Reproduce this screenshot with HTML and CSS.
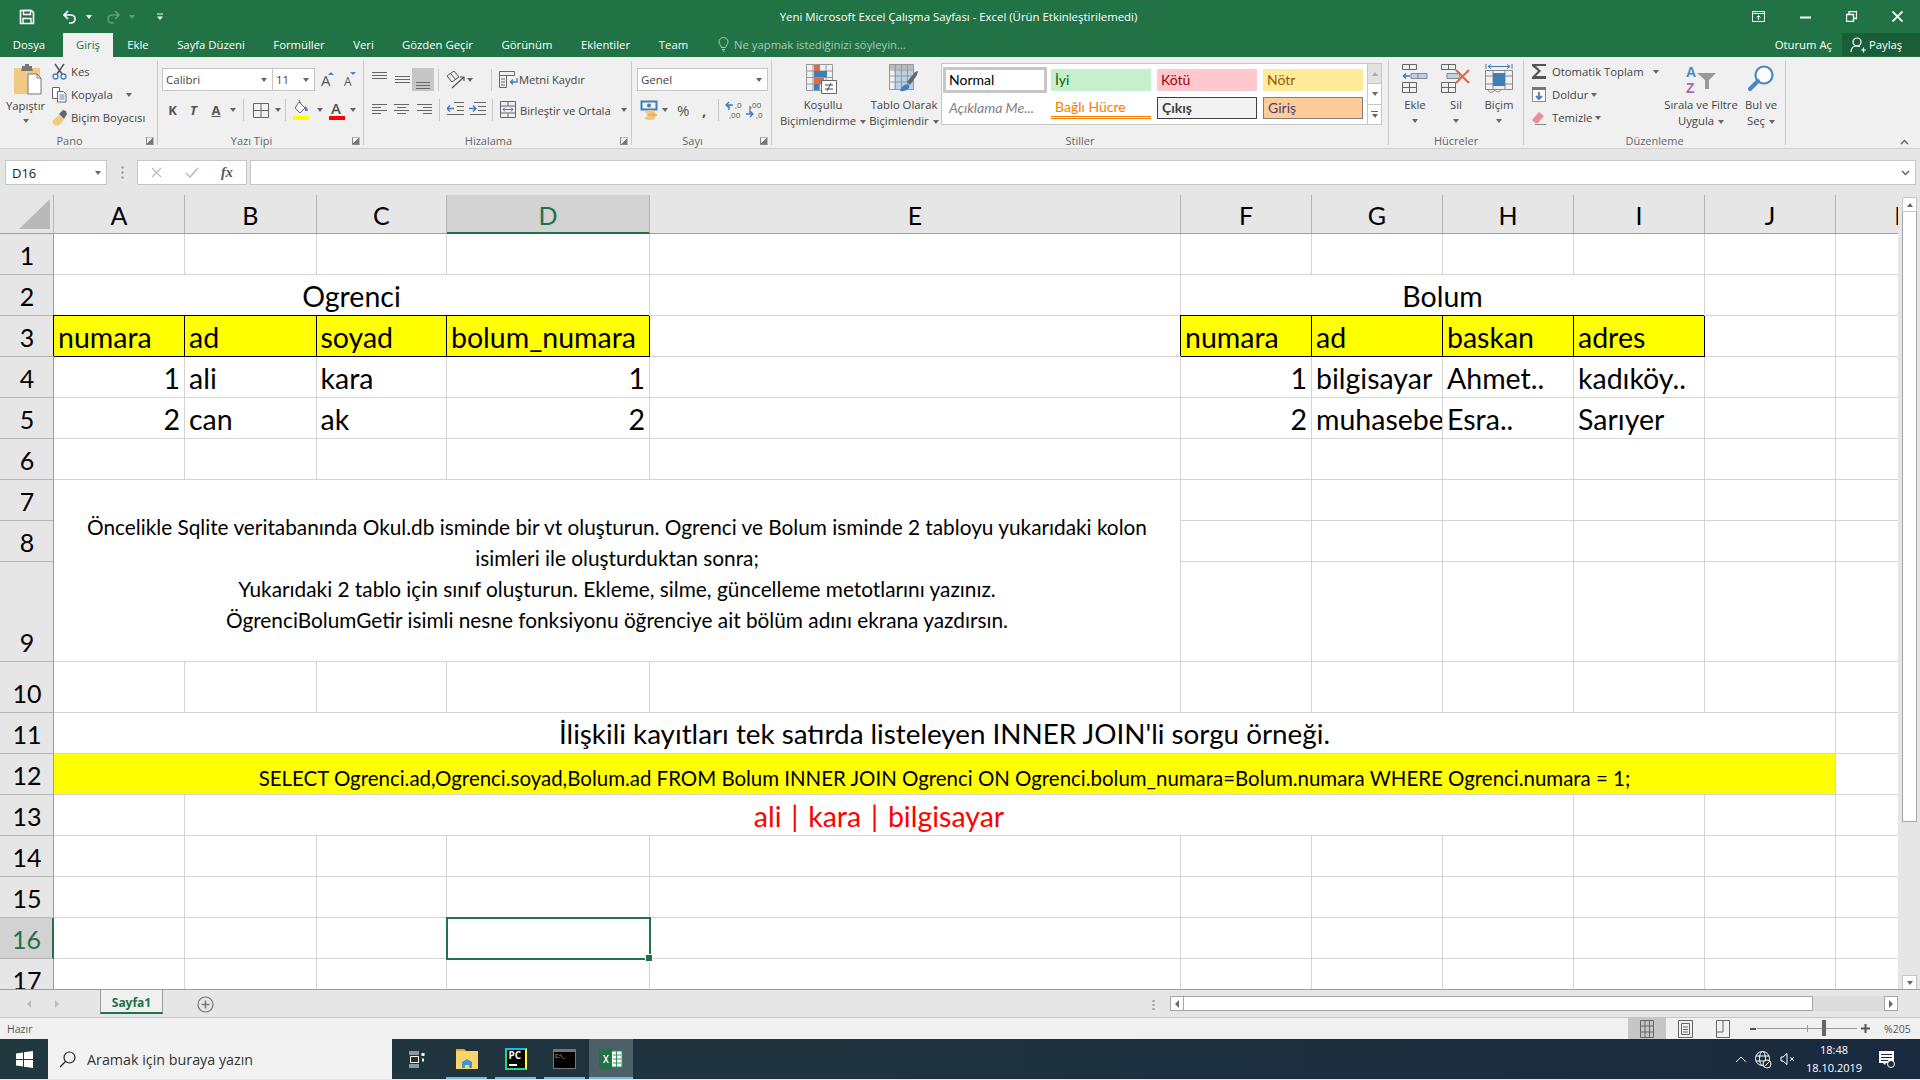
FILE: index.html
```html
<!DOCTYPE html>
<html lang="tr">
<head>
    <meta charset="UTF-8">
    <meta name="viewport" content="width=device-width, initial-scale=1.0">
    <title>Yeni Microsoft Excel Çalışma Sayfası - Excel</title>
    <link rel="stylesheet" href="styles.css">
</head>
<body>
<div class="app">

    <!-- title bar -->
    <div class="titlebar">
        <div class="qat">
            <svg class="q-save" width="16" height="16" viewBox="0 0 16 16"><path d="M1.500 1.500h11l2 2v11h-13z" fill="none" stroke="#fff" stroke-width="1.600"/><path d="M4.500 1.500h7v4h-7zM4 14.500v-5h8v5" fill="none" stroke="#fff" stroke-width="1.400"/></svg>
            <svg class="q-undo" width="16" height="16" viewBox="0 0 16 16"><path d="M6 2L2 6l4 4M2.500 6H9a4 4 0 0 1 0 8H7" fill="none" stroke="#fff" stroke-width="1.700"/></svg>
            <i class="arr arr-w q-a1"></i>
            <svg class="q-redo" width="16" height="16" viewBox="0 0 16 16"><path d="M10 2l4 4-4 4M13.500 6H7a4 4 0 0 0 0 8h2" fill="none" stroke="#5f9c7c" stroke-width="1.700"/></svg>
            <i class="arr arr-dim q-a2"></i>
            <svg class="q-more" width="8" height="8" viewBox="0 0 8 8"><path d="M1 1h6" stroke="#fff"/><path d="M1 3.500h6L4 7z" fill="#fff"/></svg>
        </div>
        <div class="doc-title">Yeni Microsoft Excel Çalışma Sayfası - Excel (Ürün Etkinleştirilemedi)</div>
        <div class="win-btns">
            <svg width="13" height="11" viewBox="0 0 13 11"><path d="M.5.500h12v10H.5zM.5 2.500h12" fill="none" stroke="#fff"/><path d="M6.500 9V4.500M4.500 6.500l2-2 2 2" fill="none" stroke="#fff"/></svg>
            <svg width="11" height="11" viewBox="0 0 11 11"><path d="M0 6.500h11" stroke="#fff" stroke-width="2"/></svg>
            <svg width="11" height="11" viewBox="0 0 11 11"><path d="M.5 3.500h7v7h-7zM3 3V.500h7.500v7H8" fill="none" stroke="#fff" stroke-width="1.300"/></svg>
            <svg width="11" height="11" viewBox="0 0 11 11"><path d="M.5.500l10 10M10.500.500l-10 10" stroke="#fff" stroke-width="1.800"/></svg>
        </div>
    </div>

    <!-- ribbon tabs -->
    <div class="tabs">
        <div class="tab tab-file">Dosya</div>
        <div class="tab tab-on">Giriş</div>
        <div class="tab">Ekle</div>
        <div class="tab">Sayfa Düzeni</div>
        <div class="tab">Formüller</div>
        <div class="tab">Veri</div>
        <div class="tab">Gözden Geçir</div>
        <div class="tab">Görünüm</div>
        <div class="tab">Eklentiler</div>
        <div class="tab">Team</div>
        <div class="tell">
            <svg width="11" height="15" viewBox="0 0 11 15"><path d="M3.500 10.500C3 8 1 7.500 1 5a4.500 4.500 0 0 1 9 0c0 2.500-2 3-2.500 5.500zM4 12.500h3M4.500 14h2" fill="none" stroke="#a9c9b7"/></svg>
            <span>Ne yapmak istediğinizi söyleyin...</span>
        </div>
        <div class="signin">Oturum Aç</div>
        <div class="share">
            <svg width="16" height="16" viewBox="0 0 16 16"><circle cx="7" cy="5" r="4" fill="none" stroke="#fff" stroke-width="1.200"/><path d="M1 15c0-4 2.500-6 6-6 1 0 2 .2 2.800.6M11 13h5M13.500 10.500v5" fill="none" stroke="#fff" stroke-width="1.200"/></svg>
            <span>Paylaş</span>
        </div>
    </div>

    <!-- ribbon -->
    <div class="ribbon">

        <div class="grp g-pano">
            <div class="grp-body">
                <div class="big big-paste">
                    <svg width="30" height="31" viewBox="0 0 30 31"><path d="M1 4h26v26H1z" fill="#f1c983"/><path d="M9 4V2h3V0h4v2h3v2l1 3H8z" fill="#777"/><path d="M15 10h9l4 4v16H15z" fill="#fff" stroke="#777"/><path d="M24 10v4h4" fill="none" stroke="#777"/></svg>
                    <div class="big-text">Yapıştır</div>
                    <i class="arr"></i>
                </div>
                <div class="small-col">
                    <div class="small"><svg width="18" height="17" viewBox="0 0 18 17"><path d="M4 1l7 10M13 1L6 11" stroke="#555" stroke-width="1.500"/><circle cx="4.500" cy="13.500" r="2.500" fill="none" stroke="#3f7ebd" stroke-width="1.300"/><circle cx="12.500" cy="13.500" r="2.500" fill="none" stroke="#3f7ebd" stroke-width="1.300"/></svg><span>Kes</span></div>
                    <div class="small"><svg width="18" height="17" viewBox="0 0 18 17"><path d="M1.500 1.500h7v11h-7z" fill="#fff" stroke="#666"/><path d="M6.500 5.500h6l2.500 2.500v8h-8.500z" fill="#fff" stroke="#666"/><path d="M8.500 9h5M8.500 11h5M8.500 13h5" stroke="#4a86c5"/></svg><span>Kopyala</span><i class="arr a-kop"></i></div>
                    <div class="small"><svg width="18" height="17" viewBox="0 0 18 17"><path d="M1 12l7-6 5 5-6 6-2-1-1 1-2-3z" fill="#f1c983"/><path d="M8 5l4-4 3 1 1 3-3 5z" fill="#666"/></svg><span>Biçim Boyacısı</span></div>
                </div>
            </div>
            <div class="grp-label lab-l"><span></span><span>Pano</span><i class="launch"></i></div>
        </div>

        <div class="grp g-font">
            <div class="grp-body col">
                <div class="row r1">
                    <div class="combo c-font">Calibri<i class="arr"></i></div>
                    <div class="combo c-size">11<i class="arr"></i></div>
                    <svg class="grow-a" width="22" height="23" viewBox="0 0 22 23"><text x="4" y="18" class="ic-a">A</text><path d="M11 7l3-3 3 3z" fill="#4a86c5"/></svg>
                    <svg width="21" height="23" viewBox="0 0 21 23"><text x="5" y="18" class="ic-a ic-a2">A</text><path d="M11 4l3 3 3-3z" fill="#4a86c5"/></svg>
                </div>
                <div class="row r2">
                    <b class="fmt fmt-k">K</b>
                    <em class="fmt fmt-t">T</em>
                    <span class="fmt fmt-a">A</span>
                    <i class="arr"></i>
                    <i class="sep s-a"></i>
                    <svg width="22" height="20" viewBox="0 0 22 20"><path d="M3.500 3.500h15v14h-15zM11 3.500v14M3.500 10.500h15" fill="none" stroke="#666"/></svg>
                    <i class="arr a-b"></i>
                    <i class="sep s-a s-a2"></i>
                    <svg width="22" height="22" viewBox="0 0 22 22"><path d="M7 3l6 6-5 5-5-5z" fill="#fff" stroke="#666"/><path d="M7 1l2 4" stroke="#666"/><path d="M13 7c2 1 3 3 3 5h-3z" fill="#4a86c5"/><path d="M1 17h16v4H1z" fill="#ff0"/></svg>
                    <i class="arr a-b"></i>
                    <svg width="22" height="22" viewBox="0 0 22 22"><text x="8" y="15" class="ic-a3">A</text><path d="M6 17h16v4H6z" fill="#f00"/></svg>
                    <i class="arr a-col"></i>
                </div>
            </div>
            <div class="grp-label lab-l"><span></span><span>Yazı Tipi</span><i class="launch"></i></div>
        </div>

        <div class="grp g-align">
            <div class="grp-body col">
                <div class="row r1">
                    <svg width="22" height="23" viewBox="0 0 22 23"><path d="M3 4.500h15M3 7.500h15M3 10.500h15" stroke="#666"/></svg>
                    <svg width="22" height="23" viewBox="0 0 22 23"><path d="M4 8.500h15M4 11.500h15M4 14.500h15" stroke="#666"/></svg>
                    <div class="al-on"><svg width="22" height="23" viewBox="0 0 22 23"><path d="M4 14.500h14M4 17.500h14M4 20.500h14" stroke="#666"/></svg></div>
                    <i class="sep s-b"></i>
                    <svg width="22" height="22" viewBox="0 0 22 22"><path d="M2 7l7-5 5 6-7 5zM6 5l5 6" fill="none" stroke="#555"/><path d="M7 19L19 8M15 8h4v4" fill="none" stroke="#555" stroke-width="1.200"/></svg>
                    <i class="arr"></i>
                    <i class="sep s-c"></i>
                    <div class="small tool-wrap"><svg width="19" height="18" viewBox="0 0 19 18"><path d="M.5.500h15v4H.5zM.5 4.500h7v12H.5zM2 8h4M2 11h4M2 14h4" fill="none" stroke="#666"/><path d="M18 7v4h-6M14 8.500L11.500 11l2.500 2.500" fill="none" stroke="#3f7ebd" stroke-width="1.300"/></svg><span>Metni Kaydır</span></div>
                </div>
                <div class="row r2">
                    <svg width="22" height="20" viewBox="0 0 22 20"><path d="M3 4.500h15M3 7.500h9M3 10.500h15M3 13.500h9" stroke="#666"/></svg>
                    <svg width="22" height="20" viewBox="0 0 22 20"><path d="M3 4.500h15M6 7.500h9M3 10.500h15M6 13.500h9" stroke="#666"/></svg>
                    <svg width="22" height="20" viewBox="0 0 22 20"><path d="M4 4.500h15M10 7.500h9M4 10.500h15M10 13.500h9" stroke="#666"/></svg>
                    <i class="sep s-d"></i>
                    <svg width="22" height="20" viewBox="0 0 22 20"><path d="M7 2.500h10M10 6.500h7M10 10.500h7M0 14.500h17" stroke="#666"/><path d="M7 8.500H0M3 5.500L0 8.500l3 3" fill="none" stroke="#3f7ebd" stroke-width="1.500"/></svg>
                    <svg width="22" height="20" viewBox="0 0 22 20"><path d="M5 2.500h12M9 6.500h8M9 10.500h8M1 14.500h16" stroke="#666"/><path d="M0 8.500h7M4 5.500l3 3-3 3" fill="none" stroke="#3f7ebd" stroke-width="1.500"/></svg>
                    <i class="sep s-e"></i>
                    <div class="small tool-wrap"><svg width="19" height="18" viewBox="0 0 19 18"><path d="M.5.500h15v16H.5zM.5 5h15M.5 12h15M8 .5V5M8 12v4.500" fill="none" stroke="#666"/><path d="M3 8.500h10M5 6.500l-2 2 2 2M11 6.500l2 2-2 2" fill="none" stroke="#3f7ebd"/></svg><span>Birleştir ve Ortala</span><i class="arr a-mrg"></i></div>
                </div>
            </div>
            <div class="grp-label lab-l"><span></span><span>Hizalama</span><i class="launch"></i></div>
        </div>

        <div class="grp g-num">
            <div class="grp-body col">
                <div class="row r1"><div class="combo c-num">Genel<i class="arr"></i></div></div>
                <div class="row r2">
                    <svg width="20" height="20" viewBox="0 0 20 20"><path d="M1.500 1.500h15v8h-15z" fill="none" stroke="#3f7ebd" stroke-width="2"/><circle cx="9" cy="5.500" r="2" fill="#3f7ebd"/><ellipse cx="10" cy="12" rx="5" ry="2" fill="#f1c983"/><ellipse cx="12" cy="15" rx="5" ry="2" fill="#e9b562"/><ellipse cx="10" cy="18" rx="5" ry="2" fill="#f1c983"/></svg>
                    <i class="arr"></i>
                    <span class="pct">%</span>
                    <span class="comma">,</span>
                    <i class="sep s-f"></i>
                    <svg width="20" height="20" viewBox="0 0 20 20"><path d="M8 5H1M4 2L1 5l3 3M4 5v5" fill="none" stroke="#3f7ebd" stroke-width="1.300"/><text x="10" y="8" class="ic-n">,0</text><text x="4" y="18" class="ic-n">,00</text></svg>
                    <svg width="20" height="20" viewBox="0 0 20 20"><path d="M1 14h7M5 11l3 3-3 3M5 6v8" fill="none" stroke="#3f7ebd" stroke-width="1.300"/><text x="5" y="8" class="ic-n">,00</text><text x="11" y="18" class="ic-n">,0</text></svg>
                </div>
            </div>
            <div class="grp-label lab-l"><span></span><span>Sayı</span><i class="launch"></i></div>
        </div>

        <div class="grp g-styles">
            <div class="grp-body">
                <div class="big big-cond">
                    <svg width="34" height="30" viewBox="0 0 34 30"><path d="M.5.500h26v26H.5zM.5 7h26M.5 13.500h26M.5 20h26M7 .5v26M13.500.5v26M20 .5v26" fill="none" stroke="#999"/><path d="M8 1h6v6H8zM8 14h10v6H8z" fill="#e0694a"/><path d="M8 7h13v6H8zM8 20h5v6H8z" fill="#3f7ebd"/><path d="M15.500 16.500h15v13h-15z" fill="#fff" stroke="#666"/><path d="M19 21h8M19 25h8M25 19l-4 8" fill="none" stroke="#444"/></svg>
                    <div class="big-text">Koşullu<br>Biçimlendirme<i class="arr"></i></div>
                </div>
                <div class="big big-table">
                    <svg width="30" height="30" viewBox="0 0 30 30"><path d="M0 0h25v5H0z" fill="#bbb"/><path d="M5 5h20v21H5z" fill="#bcd0e6"/><path d="M.5.500h24v25H.5zM.5 6h24M.5 12h24M.5 18h24M6.500.5v25M12.500.5v25M18.500.5v25" fill="none" stroke="#999"/><path d="M18 18L26 8l3-1-1 4-7 10z" fill="#666"/><path d="M11 27c2-6 6-8 9-6 2 3-3 7-9 6z" fill="#3f7ebd"/></svg>
                    <div class="big-text">Tablo Olarak<br>Biçimlendir<i class="arr"></i></div>
                </div>
                <div class="gallery">
                    <div class="g-items">
                        <div class="st st-normal">Normal</div>
                        <div class="st st-good">İyi</div>
                        <div class="st st-bad">Kötü</div>
                        <div class="st st-neutral">Nötr</div>
                        <div class="st st-note">Açıklama Me...</div>
                        <div class="st st-link">Bağlı Hücre</div>
                        <div class="st st-out">Çıkış</div>
                        <div class="st st-in">Giriş</div>
                    </div>
                    <div class="g-scroll">
                        <div class="g-btn g-dis"><i class="up"></i></div>
                        <div class="g-btn"><i class="arr"></i></div>
                        <div class="g-btn g-more"><i class="bar"></i><i class="arr"></i></div>
                    </div>
                </div>
            </div>
            <div class="grp-label"><span></span><span>Stiller</span><span></span></div>
        </div>

        <div class="grp g-cells">
            <div class="grp-body">
                <div class="big big-ins">
                    <svg width="26" height="30" viewBox="0 0 26 30"><path d="M.5.500h14v5H.5zM7.500.5v5M.5 18.500h14v10H.5zM7.500 18.500v10M.5 23.500h14" fill="none" stroke="#666"/><path d="M9 9.500h16v5H9zM16 9.500v5" fill="#bcd0e6" stroke="#888"/><path d="M8 12H1M4 9.500L1.500 12 4 14.500" fill="none" stroke="#3f7ebd" stroke-width="1.500"/></svg>
                    <div class="big-text">Ekle</div>
                    <i class="arr"></i>
                </div>
                <div class="big big-del">
                    <svg width="30" height="30" viewBox="0 0 30 30"><path d="M.5.500h14v5H.5zM7.500.5v5M.5 18.500h14v10H.5zM7.500 18.500v10M.5 23.500h14" fill="none" stroke="#666"/><path d="M6 9.500h13v5H6z" fill="#bcd0e6" stroke="#888"/><path d="M15 6l13 13M28 6L15 19" stroke="#e0694a" stroke-width="2.200"/></svg>
                    <div class="big-text">Sil</div>
                    <i class="arr"></i>
                </div>
                <div class="big big-fmt">
                    <svg width="28" height="30" viewBox="0 0 28 30"><path d="M1 0v5M27 0v5M3 2.500h22M6 .5l-3 2 3 2M22 .5l3 2-3 2" fill="none" stroke="#3f7ebd"/><path d="M.5 6.500h27v19H.5zM.5 12h27M8 6.500v19M20 6.500v19M.5 20h27" fill="none" stroke="#888"/><path d="M8 9h12v13H8z" fill="#3f7ebd"/><path d="M3 26c1 3 5 3 7 0 1 3 5 2 6 0" fill="none" stroke="#888"/></svg>
                    <div class="big-text">Biçim</div>
                    <i class="arr"></i>
                </div>
            </div>
            <div class="grp-label"><span></span><span>Hücreler</span><span></span></div>
        </div>

        <div class="grp g-edit">
            <div class="grp-body">
                <div class="small-col edit-col">
                    <div class="small"><svg width="20" height="17" viewBox="0 0 20 17"><path d="M1 1h14v2H5l5 5-5 5h10v3H1v-2l6-6-6-5z" fill="#555"/></svg><span>Otomatik Toplam</span><i class="arr a-sum"></i></div>
                    <div class="small"><svg width="20" height="17" viewBox="0 0 20 17"><path d="M1.500 1.500h13v14h-13z" fill="#fff" stroke="#888"/><path d="M1 1h14v3H1z" fill="#777"/><path d="M8 6v7M5 10l3 3 3-3" fill="none" stroke="#3f7ebd" stroke-width="1.800"/></svg><span>Doldur</span><i class="arr"></i></div>
                    <div class="small"><svg width="20" height="17" viewBox="0 0 20 17"><path d="M1 11l7-8 5 4-6 7H4z" fill="#ee8c9a"/><path d="M4 15.500h11" stroke="#888"/></svg><span>Temizle</span><i class="arr"></i></div>
                </div>
                <div class="big big-sort">
                    <svg class="az-ic" width="31" height="33" viewBox="0 0 31 33"><text x="0" y="14" class="ic-az ic-az-a">A</text><text x="0" y="30" class="ic-az ic-az-z">Z</text><path d="M11 10h19l-7 7v9h-4v-9z" fill="#999"/></svg>
                    <div class="big-text">Sırala ve Filtre<br>Uygula<i class="arr"></i></div>
                </div>
                <div class="big big-find">
                    <svg width="28" height="30" viewBox="0 0 28 30"><circle cx="17" cy="11" r="8.500" fill="#fff" stroke="#4a86c5" stroke-width="2.200"/><path d="M11 17L3 25" stroke="#4a86c5" stroke-width="4" stroke-linecap="round"/></svg>
                    <div class="big-text">Bul ve<br>Seç<i class="arr"></i></div>
                </div>
            </div>
            <div class="grp-label"><span></span><span>Düzenleme</span><span></span></div>
        </div>

        <svg class="collapse" width="9" height="6" viewBox="0 0 9 6"><path d="M1 5l3.500-3.500L8 5" fill="none" stroke="#666" stroke-width="1.500"/></svg>
    </div>

    <!-- formula bar -->
    <div class="fbar">
        <div class="namebox">D16<i class="arr"></i></div>
        <div class="fdots"></div>
        <div class="fbtns">
            <svg width="13" height="13" viewBox="0 0 13 13"><path d="M2 2l9 9M11 2l-9 9" stroke="#bdbdbd" stroke-width="1.400"/></svg>
            <svg width="14" height="13" viewBox="0 0 14 13"><path d="M1 7l4 4 8-9" fill="none" stroke="#bdbdbd" stroke-width="1.600"/></svg>
            <span class="fx">fx</span>
        </div>
        <div class="finput"><svg width="9" height="6" viewBox="0 0 9 6"><path d="M1 1l3.500 3.500L8 1" fill="none" stroke="#666" stroke-width="1.500"/></svg></div>
    </div>

    <!-- worksheet -->
    <div class="sheet-wrap">
        <div class="sheet">
            <div class="h h-corner"><i class="corner"></i></div><div class="h">A</div><div class="h">B</div><div class="h">C</div><div class="h h-on">D</div><div class="h">E</div><div class="h">F</div><div class="h">G</div><div class="h">H</div><div class="h">I</div><div class="h">J</div><div class="h">K</div>

            <div class="n">1</div><div class="c"></div><div class="c"></div><div class="c"></div><div class="c"></div><div class="c"></div><div class="c"></div><div class="c"></div><div class="c"></div><div class="c"></div><div class="c"></div><div class="c"></div>

            <div class="n">2</div><div class="c m4 ctr">Ogrenci</div><div class="c"></div><div class="c m4 ctr">Bolum</div><div class="c"></div><div class="c"></div>

            <div class="n">3</div><div class="c y">numara</div><div class="c y">ad</div><div class="c y">soyad</div><div class="c y">bolum_numara</div><div class="c"></div><div class="c y">numara</div><div class="c y">ad</div><div class="c y">baskan</div><div class="c y">adres</div><div class="c"></div><div class="c"></div>

            <div class="n">4</div><div class="c num">1</div><div class="c">ali</div><div class="c">kara</div><div class="c num">1</div><div class="c"></div><div class="c num">1</div><div class="c">bilgisayar</div><div class="c">Ahmet..</div><div class="c">kadıköy..</div><div class="c"></div><div class="c"></div>

            <div class="n">5</div><div class="c num">2</div><div class="c">can</div><div class="c">ak</div><div class="c num">2</div><div class="c"></div><div class="c num">2</div><div class="c">muhasebe</div><div class="c">Esra..</div><div class="c">Sarıyer</div><div class="c"></div><div class="c"></div>

            <div class="n">6</div><div class="c"></div><div class="c"></div><div class="c"></div><div class="c"></div><div class="c"></div><div class="c"></div><div class="c"></div><div class="c"></div><div class="c"></div><div class="c"></div><div class="c"></div>

            <div class="n">7</div>
            <div class="c note">Öncelikle Sqlite veritabanında Okul.db isminde bir vt oluşturun. Ogrenci ve Bolum isminde 2 tabloyu yukarıdaki kolon<br>isimleri ile oluşturduktan sonra;<br>Yukarıdaki 2 tablo için sınıf oluşturun. Ekleme, silme, güncelleme metotlarını yazınız.<br>ÖgrenciBolumGetir isimli nesne fonksiyonu öğrenciye ait bölüm adını ekrana yazdırsın.</div>
            <div class="c"></div><div class="c"></div><div class="c"></div><div class="c"></div><div class="c"></div><div class="c"></div>

            <div class="n">8</div><div class="c"></div><div class="c"></div><div class="c"></div><div class="c"></div><div class="c"></div><div class="c"></div>

            <div class="n">9</div><div class="c"></div><div class="c"></div><div class="c"></div><div class="c"></div><div class="c"></div><div class="c"></div>

            <div class="n">10</div><div class="c"></div><div class="c"></div><div class="c"></div><div class="c"></div><div class="c"></div><div class="c"></div><div class="c"></div><div class="c"></div><div class="c"></div><div class="c"></div><div class="c"></div>

            <div class="n">11</div><div class="c m10 ctr big-t">İlişkili kayıtları tek satırda listeleyen INNER JOIN'li sorgu örneği.</div><div class="c"></div>

            <div class="n">12</div><div class="c m10 ctr sql">SELECT Ogrenci.ad,Ogrenci.soyad,Bolum.ad FROM Bolum INNER JOIN Ogrenci ON Ogrenci.bolum_numara=Bolum.numara WHERE Ogrenci.numara = 1;</div><div class="c"></div>

            <div class="n">13</div><div class="c"></div><div class="c m7 ctr res">ali | kara | bilgisayar</div><div class="c"></div><div class="c"></div><div class="c"></div>

            <div class="n">14</div><div class="c"></div><div class="c"></div><div class="c"></div><div class="c"></div><div class="c"></div><div class="c"></div><div class="c"></div><div class="c"></div><div class="c"></div><div class="c"></div><div class="c"></div>

            <div class="n">15</div><div class="c"></div><div class="c"></div><div class="c"></div><div class="c"></div><div class="c"></div><div class="c"></div><div class="c"></div><div class="c"></div><div class="c"></div><div class="c"></div><div class="c"></div>

            <div class="n n-on">16</div><div class="c"></div><div class="c"></div><div class="c"></div><div class="c sel"></div><div class="c"></div><div class="c"></div><div class="c"></div><div class="c"></div><div class="c"></div><div class="c"></div><div class="c"></div>

            <div class="n">17</div><div class="c"></div><div class="c"></div><div class="c"></div><div class="c"></div><div class="c"></div><div class="c"></div><div class="c"></div><div class="c"></div><div class="c"></div><div class="c"></div><div class="c"></div>
        </div>
        <div class="vscroll">
            <div class="sb-btn"><i class="up"></i></div>
            <div class="sb-thumb"></div>
            <div class="sb-track"></div>
            <div class="sb-btn"><i class="arr"></i></div>
        </div>
    </div>

    <!-- sheet tabs -->
    <div class="sheetbar">
        <i class="nav nav-l"></i>
        <i class="nav nav-r"></i>
        <div class="sheet-tab">Sayfa1</div>
        <svg class="add" width="17" height="17" viewBox="0 0 17 17"><circle cx="8.500" cy="8.500" r="7.500" fill="none" stroke="#777" stroke-width="1.200"/><path d="M4.500 8.500h8M8.500 4.500v8" stroke="#777" stroke-width="1.500"/></svg>
        <div class="hdots"></div>
        <div class="hscroll">
            <div class="hbtn"><i class="tri-l"></i></div>
            <div class="hthumb"></div>
            <div class="htrack"></div>
            <div class="hbtn"><i class="tri-r"></i></div>
        </div>
    </div>

    <!-- status bar -->
    <div class="status">
        <span class="ready">Hazır</span>
        <div class="views">
            <div class="view view-on"><svg width="14" height="18" viewBox="0 0 14 18"><path d="M.5.500h13v17H.5zM.5 6h13M.5 12h13M5 .5v17M9.500.5v17" fill="none" stroke="#666"/></svg></div>
            <div class="view"><svg width="15" height="18" viewBox="0 0 15 18"><path d="M.5.500h14v17H.5z" fill="none" stroke="#666"/><path d="M3.500 3.500h8v11h-8zM5 7h5M5 9.500h5M5 12h5" fill="none" stroke="#666"/></svg></div>
            <div class="view"><svg width="14" height="18" viewBox="0 0 14 18"><path d="M.5.500h13v17H.5zM.5 12h6.500M7 .5V12" fill="none" stroke="#666"/></svg></div>
        </div>
        <div class="zoom">
            <i class="z-minus"></i>
            <div class="z-track"><i class="z-mid"></i><i class="z-thumb"></i></div>
            <svg width="9" height="9" viewBox="0 0 9 9"><path d="M0 4.500h9M4.500 0v9" stroke="#555" stroke-width="2"/></svg>
        </div>
        <span class="zoom-val">%205</span>
    </div>

    <!-- taskbar -->
    <div class="taskbar">
        <svg class="t-win" width="17" height="17" viewBox="0 0 17 17"><path d="M0 2.400l7-1V8H0zM8 1.200L17 0v8H8zM0 9h7v6.600l-7-1zM8 9h9v8l-9-1.200z" fill="#fff"/></svg>
        <div class="t-search">
            <svg width="17" height="17" viewBox="0 0 17 17"><circle cx="10.500" cy="6.500" r="5.500" fill="none" stroke="#222" stroke-width="1.200"/><path d="M6.500 10.500L1 16" stroke="#222" stroke-width="1.200"/></svg>
            <span>Aramak için buraya yazın</span>
        </div>
        <div class="t-app t-view"><svg width="17" height="17" viewBox="0 0 17 17"><path d="M1 1h10M1 3h10M1 14h10M1 16h10M2.500 5.500h8v6h-8z" fill="none" stroke="#fff"/><path d="M13.500 2h3v3h-3zM14 7.500h2v3h-2z" fill="#fff"/></svg></div>
        <div class="t-app t-run"><svg width="24" height="20" viewBox="0 0 24 20"><path d="M1 0h8l2 2h12v18H1z" fill="#fbd46b"/><path d="M1 0h8l2 2H1z" fill="#e2a72c"/><path d="M7 19v-6l5-3 5 3v6h-3v-3h-4v3z" fill="#3a96dd"/></svg></div>
        <div class="t-app t-run"><div class="pc"><span>PC</span><i></i></div></div>
        <div class="t-app t-run"><div class="cmd"><span>C:\_</span></div></div>
        <div class="t-app t-run t-active"><svg width="24" height="22" viewBox="0 0 24 22"><path d="M12 3h11v16H12z" fill="#fff" stroke="#2f8f5f"/><path d="M14 7h8M14 11h8M14 15h8M17.500 3v16" stroke="#2f8f5f"/><path d="M0 2l13-2v22L0 20z" fill="#217346"/><path d="M4 7l1.500 0L7 10l1.500-3H10l-2.200 4 2.200 4H8.500L7 12l-1.500 3H4l2.200-4z" fill="#fff"/></svg></div>
        <div class="tray">
            <svg width="12" height="7" viewBox="0 0 12 7"><path d="M1 6l5-5 5 5" fill="none" stroke="#fff"/></svg>
            <svg width="17" height="19" viewBox="0 0 17 19"><circle cx="7.500" cy="8.500" r="7" fill="none" stroke="#fff"/><ellipse cx="7.500" cy="8.500" rx="3" ry="7" fill="none" stroke="#fff"/><path d="M1 6h13M1 11h13" stroke="#fff"/><circle cx="12" cy="14" r="4" fill="#1c2d3e" stroke="#fff"/><path d="M9.500 16.500l5-5" stroke="#fff"/></svg>
            <svg width="15" height="14" viewBox="0 0 15 14"><path d="M1 5v4h2l4 3.500V1.500L3 5z" fill="none" stroke="#fff"/><path d="M10 5l4 4M14 5l-4 4" stroke="#fff"/></svg>
            <div class="clock"><span>18:48</span><span>18.10.2019</span></div>
            <svg class="notif" width="17" height="18" viewBox="0 0 17 18"><path d="M1 1h15v12H8l-1 2-2-2H1z" fill="#fff"/><path d="M3 4.500h11M3 7.500h11M3 10.500h7" stroke="#1c2d3e"/><circle cx="13" cy="14" r="3.500" fill="#1c2d3e" stroke="#fff"/></svg>
        </div>
    </div>
</div>
</body>
</html>
```

FILE: styles.css
```css
* { box-sizing: border-box; }
html, body { margin: 0; padding: 0; }
body { font-family: 'Open Sans', sans-serif; font-size: 11.3px; color: #444; background: #e6e6e6; }
i { display: block; font-style: normal; }
svg { display: block; flex: none; }

.app { width: 1920px; height: 1080px; display: flex; flex-direction: column; overflow: hidden; }

/* dropdown triangle used everywhere */
.arr { flex: none; width: 0; height: 0; border-left: 3.5px solid transparent; border-right: 3.5px solid transparent; border-top: 4px solid #666; }
.arr-w { border-top-color: #fff; }
.arr-dim { border-top-color: #5f9c7c; }

/* title bar */
.titlebar { height: 33px; background: #217346; color: #fff; display: grid; grid-template-columns: 1fr auto 1fr; align-items: center; }
.qat { display: flex; align-items: center; padding-left: 19px; }
.q-undo { margin-left: 27px; }
.q-a1 { margin-left: 8px; }
.q-redo { margin-left: 13px; }
.q-a2 { margin-left: 8px; }
.q-more { margin-left: 21px; }
.doc-title { font-size: 11.4px; color: #fff; padding-right: 3px; }
.win-btns { display: flex; align-items: center; justify-content: flex-end; gap: 35px; padding-right: 17px; }

/* tabs */
.tabs { height: 24px; background: #217346; display: grid; grid-template-columns: 63px 50px 50px 96px 80px 49px 99px 80px 77px 59px 1fr auto 78px; color: #fff; }
.tab { display: flex; align-items: center; justify-content: center; font-size: 11.3px; color: #fff; padding-bottom: 2px; }
.tab-file { padding-right: 5px; }
.tab-on { background: #f0f0f0; color: #217346; }
.tell { display: flex; align-items: center; gap: 5px; padding-left: 15px; color: #a9c9b7; font-size: 11.3px; padding-bottom: 2px; }
.signin { color: #fff; font-size: 11.3px; display: flex; align-items: center; padding-right: 10px; padding-bottom: 2px; }
.share { background: #1a5e39; display: flex; align-items: center; gap: 3px; padding-left: 8px; color: #fff; font-size: 11.3px; height: 23px; }

/* ribbon */
.ribbon { height: 92px; background: #f0f0f0; border-bottom: 1px solid #d2d2d2; display: flex; align-items: flex-start; padding-top: 4px; position: relative; }
.grp { height: 84px; border-right: 1px solid #c8c8c8; display: flex; flex-direction: column; flex: none; }
.g-pano { width: 158px; }
.g-font { width: 206px; }
.g-align { width: 268px; }
.g-num { width: 140px; }
.g-styles { width: 617px; }
.g-cells { width: 135px; }
.g-edit { width: 262px; }
.grp-body { flex: 1; display: flex; min-height: 0; }
.col { flex-direction: column; padding-top: 7px; }
.grp-label { height: 16px; margin-bottom: -4px; display: grid; grid-template-columns: 1fr auto 1fr; align-items: center; color: #666; font-size: 11px; line-height: 16px; }
.lab-l { padding-right: 18px; }
.launch { justify-self: end; margin-right: -15px; width: 8px; height: 8px; border-left: 1px solid #888; border-bottom: 1px solid #888; border-top: 1px solid #bbb; border-right: 1px solid #bbb; background: linear-gradient(135deg, transparent 50%, #777 50%); }
.collapse { position: absolute; right: 11px; bottom: 3px; }

.row { display: flex; align-items: center; }
.r1 { height: 23px; }
.r2 { height: 22px; margin-top: 8px; }
.sep { flex: none; width: 1px; height: 22px; background: #c8c8c8; }

.big { display: flex; flex-direction: column; align-items: center; flex: none; padding-top: 3px; }
.big-text { margin-top: 3px; text-align: center; line-height: 16px; white-space: nowrap; }
.big-text .arr { display: inline-block; vertical-align: middle; margin-left: 4px; }
.big > .arr { margin-top: 6px; }

.small-col { display: flex; flex-direction: column; margin-top: -1px; }
.small { height: 23px; display: flex; align-items: center; gap: 2px; white-space: nowrap; }

/* clipboard group */
.big-paste { width: 51px; }
.big-paste svg { margin-left: 5px; }
.big-paste .big-text { margin-top: 3px; }
.big-paste > .arr { margin-top: 5px; }
.a-kop { margin-left: 11px; }

/* font group */
.g-font .grp-body { padding-left: 4px; }
.combo { height: 23px; background: #fff; border: 1px solid #c6c6c6; display: flex; align-items: center; justify-content: space-between; padding: 0 5px 0 3px; flex: none; color: #444; font-size: 11.5px; }
.c-font { width: 111px; }
.c-size { width: 43px; margin-left: -1px; }
.ic-a { font-size: 15px; fill: #555; font-family: 'Open Sans', sans-serif; }
.ic-a2 { font-size: 12px; }
.grow-a { margin-left: 2px; }
.ic-a3 { font-size: 15px; fill: #555; font-family: 'Open Sans', sans-serif; font-weight: 600; }
.fmt { flex: none; width: 21px; text-align: center; font-size: 13px; color: #555; line-height: 22px; }
.fmt-k { font-weight: 700; }
.fmt-t { font-weight: 700; font-style: italic; }
.fmt-a { width: 26px; font-weight: 700; text-decoration: underline; padding-right: 2px; }
.s-a { margin: 0 6px 0 7px; }
.s-a2 { margin-left: 4px; }
.a-b { margin-left: 3px; }
.a-col { margin-left: 5px; }

/* alignment group */
.g-align .grp-body { padding-left: 5px; }
.al-on { background: #c6c6c6; height: 23px; width: 22px; margin-left: -1px; }
.s-b { margin: 0 6px 0 4px; }
.s-c { margin: 0 7px 0 18px; }
.s-d { margin: 0 7px 0 4px; }
.s-e { margin: 0 7px 0 1px; }
.tool-wrap { gap: 1px; font-size: 11.2px; }
.a-mrg { margin-left: 9px; }

/* number group */
.g-num .grp-body { padding-left: 5px; }
.c-num { width: 131px; }
.g-num .r2 { padding-left: 3px; }
.g-num .r2 .arr { margin-left: 2px; }
.pct { margin-left: 9px; font-size: 15px; color: #555; width: 15px; }
.comma { margin-left: 10px; font-size: 15px; font-weight: 700; color: #555; width: 7px; line-height: 12px; }
.s-f { margin: 0 6px 0 9px; }
.ic-n { font-size: 8px; fill: #555; font-family: 'Open Sans', sans-serif; }

/* styles group */
.big-cond { width: 94px; padding-left: 8px; }
.big-table { width: 74px; padding-left: 2px; }
.gallery { display: flex; height: 62px; margin: 2px 0 0 1px; }
.g-items { width: 427px; background: #fff; border: 1px solid #c6c6c6; padding: 5px 3px 0 3px; display: grid; grid-template-columns: repeat(4, 100px); grid-template-rows: 22px 22px; gap: 6px; font-family: Lato, sans-serif; font-size: 14px; }
.st { display: flex; align-items: center; padding-left: 4px; color: #000; padding-bottom: 1px; white-space: nowrap; overflow: hidden; }
.st-normal { border: 3px solid #c6c6c6; margin: -2px; padding-left: 3px; }
.st-good { background: #c6efce; color: #006100; }
.st-bad { background: #ffc7ce; color: #9c0006; }
.st-neutral { background: #ffeb9c; color: #9c5700; }
.st-note { color: #7f7f7f; font-style: italic; }
.st-link { color: #fa7d00; border-bottom: 3px double #fa7d00; }
.st-out { background: #f2f2f2; color: #3f3f3f; font-weight: 700; border: 1px solid #3f3f3f; }
.st-in { background: #ffcc99; color: #3f3f76; border: 1px solid #7f7f7f; }
.g-scroll { width: 14px; display: flex; flex-direction: column; border: 1px solid #c6c6c6; border-left: 0; }
.g-btn { flex: 1; display: flex; flex-direction: column; align-items: center; justify-content: center; gap: 2px; background: #fff; border-bottom: 1px solid #c6c6c6; }
.g-btn:last-child { border-bottom: 0; }
.g-dis { background: #e2e2e2; }
.g-more .bar { width: 7px; height: 1px; background: #666; }
.up { width: 0; height: 0; border-left: 3.5px solid transparent; border-right: 3.5px solid transparent; border-bottom: 4px solid #aaa; }

/* cells group */
.big-ins { width: 42px; margin-left: 5px; }
.big-del { width: 40px; }
.big-fmt { width: 46px; }

/* editing group */
.edit-col { width: 142px; padding-left: 7px; }
.edit-col .small { gap: 1px; }
.edit-col .arr { margin-left: 2px; }
.edit-col .a-sum { margin-left: 8px; }
.big-sort { width: 72px; }
.big-find { width: 48px; }
.az-ic { margin: -1px 0 -2px; }
.ic-az { font-family: 'Liberation Sans', sans-serif; font-weight: 700; font-size: 14px; }
.ic-az-a { fill: #4a86c5; }
.ic-az-z { fill: #a06ab4; }

/* formula bar */
.fbar { height: 46px; padding: 11px 4px 10px 5px; display: flex; background: #e6e6e6; }
.namebox { width: 102px; background: #fff; border: 1px solid #c6c6c6; display: flex; align-items: center; justify-content: space-between; padding: 0 5px 0 6px; font-size: 13px; color: #222; }
.fdots { width: 30px; background: radial-gradient(circle, #aaa 1px, transparent 1.500px) center / 3px 5px repeat-y; margin: 6px 0; }
.fbtns { width: 110px; background: #fff; border: 1px solid #c6c6c6; display: flex; align-items: center; padding-left: 12px; gap: 22px; margin-right: 3px; }
.fx { font-family: 'Liberation Serif', serif; font-style: italic; font-weight: 700; font-size: 14px; color: #555; }
.finput { flex: 1; background: #fff; border: 1px solid #c6c6c6; display: flex; align-items: center; justify-content: flex-end; padding-right: 5px; }

/* worksheet */
.sheet-wrap { height: 795px; display: flex; background: #e6e6e6; }
.sheet { width: 1898px; height: 795px; overflow: hidden; display: grid; grid-template-columns: 54px 131px 131.500px 130.500px 203px 531px 131px 131px 131px 131px 131px 134px; grid-template-rows: 39px repeat(8, 41px) 100px 51px repeat(7, 41px); background: #fff; font-family: Lato, sans-serif; font-size: 28.500px; color: #000; }
.h { background: #e6e6e6; border-right: 1px solid #b5b5b5; border-bottom: 1px solid #9d9d9d; text-align: center; line-height: 41px; font-size: 25px; }
.h-corner { position: relative; }
.corner { position: absolute; left: 19px; top: 4px; width: 31px; height: 30px; background: #b9b9b9; clip-path: polygon(100% 0, 100% 100%, 0 100%); }
.h-on { background: #d2d2d2; color: #217346; border-bottom: 2px solid #217346; }
.n { background: #e6e6e6; border-right: 1px solid #9d9d9d; border-bottom: 1px solid #b5b5b5; display: flex; align-items: flex-end; justify-content: center; line-height: 38px; font-size: 25px; padding-left: 1px; }
.n-on { background: #d2d2d2; color: #217346; border-right: 2px solid #217346; }
.c { border-right: 1px solid #d4d4d4; border-bottom: 1px solid #d4d4d4; padding: 0 4px; display: flex; align-items: flex-end; line-height: 38px; overflow: hidden; white-space: nowrap; min-width: 0; }
.num { justify-content: flex-end; }
.ctr { justify-content: center; }
.m4 { grid-column: span 4; }
.m7 { grid-column: span 7; }
.m10 { grid-column: span 10; }
.y { background: #ff0; border-right-color: #000; border-bottom-color: #000; box-shadow: -1px -1px 0 #000; }
.note { grid-column: span 5; grid-row: span 3; display: block; text-align: center; font-size: 20.800px; line-height: 31px; padding-top: 31px; }
.big-t { font-size: 27.800px; }
.sql { background: #ff0; font-size: 20.450px; line-height: 32px; }
.res { color: #f00; font-size: 28.500px; word-spacing: 2.500px; }
.sel { position: relative; overflow: visible; outline: 2px solid #217346; outline-offset: -1px; }
.sel::after { content: ""; position: absolute; right: -4px; bottom: -4px; width: 6px; height: 6px; background: #217346; border: 1px solid #fff; }

.vscroll { width: 22px; padding: 2px 3px 0 4px; display: flex; flex-direction: column; background: #e6e6e6; }
.sb-btn { height: 15px; flex: none; background: #fff; border: 1px solid #c6c6c6; display: flex; align-items: center; justify-content: center; }
.sb-btn .up { border-bottom-color: #666; }
.sb-thumb { height: 610px; flex: none; background: #fff; border: 1px solid #a6a6a6; border-top: 0; }
.sb-track { flex: 1; }

/* sheet tabs */
.sheetbar { height: 29px; border-top: 1px solid #9d9d9d; border-bottom: 1px solid #c6c6c6; margin-top: -1px; background: #e6e6e6; display: flex; align-items: flex-start; position: relative; z-index: 1; }
.nav { width: 0; height: 0; border-top: 4px solid transparent; border-bottom: 4px solid transparent; margin-top: 10px; }
.nav-l { margin-left: 27px; border-right: 4px solid #bbb; }
.nav-r { margin-left: 24px; border-left: 4px solid #bbb; }
.sheet-tab { width: 63px; height: 25px; margin: -1px 0 0 41px; background: #f0f0f0; border: 1px solid #9d9d9d; border-bottom: 2px solid #217346; color: #217346; font-weight: 700; font-size: 12px; text-align: center; line-height: 26px; }
.add { margin: 6px 0 0 34px; }
.hdots { width: 3px; height: 12px; margin: 9px 0 0 938px; background: radial-gradient(circle, #aaa 1px, transparent 1.500px) 0 0 / 3px 4px; }
.hscroll { width: 728px; height: 15px; margin: 6px 0 0 15px; display: flex; background: #dcdcdc; }
.hbtn { width: 14px; background: #fff; border: 1px solid #a6a6a6; display: flex; align-items: center; justify-content: center; flex: none; }
.tri-l { border-top: 4px solid transparent; border-bottom: 4px solid transparent; border-right: 4px solid #666; }
.tri-r { border-top: 4px solid transparent; border-bottom: 4px solid transparent; border-left: 4px solid #666; }
.hthumb { width: 629px; background: #fff; border: 1px solid #a6a6a6; border-left: 0; flex: none; }
.htrack { flex: 1; }

/* status bar */
.status { height: 21px; background: #f0f0f0; display: flex; align-items: center; font-size: 10.500px; color: #555; }
.ready { margin-left: 7px; width: 1621px; }
.views { display: flex; height: 21px; }
.view { width: 38px; display: flex; align-items: center; justify-content: center; }
.view-on { background: #c6c6c6; }
.zoom { display: flex; align-items: center; margin-left: 8px; }
.z-minus { width: 6px; height: 2px; background: #555; }
.z-track { width: 100px; height: 1px; background: #999; margin: 0 4px 0 1px; position: relative; }
.z-mid { position: absolute; left: 50px; top: -3px; width: 1px; height: 7px; background: #999; }
.z-thumb { position: absolute; left: 65px; top: -8px; width: 4px; height: 16px; background: #666; }
.zoom-val { margin-left: 14px; white-space: nowrap; }

/* taskbar */
.taskbar { height: 40px; background: linear-gradient(90deg, #21383f, #1a2a3e); display: flex; align-items: center; color: #fff; }
.t-win { margin-left: 16px; }
.t-search { width: 344px; height: 40px; margin: 0 0 0 15px; background: #f2f2f2; display: flex; align-items: center; padding-left: 11px; gap: 11px; color: #333; font-size: 14.300px; }
.t-app { height: 40px; display: flex; align-items: center; justify-content: center; position: relative; flex: none; width: 49px; }
.t-view { margin: 0 9px 0 7px; width: 34px; }
.t-run { width: 49px; }
.t-run::after { content: ""; position: absolute; left: 4px; right: 4px; bottom: 0; height: 2px; background: #76b9ed; }
.t-active { background: #4c6068; width: 44px; }
.t-active::after { left: 0; right: 0; }
.pc { width: 22px; height: 22px; background: #000; border: 2px solid #21d789; border-right-color: #fcf84a; border-top-color: #07c3f2; color: #fff; font-size: 10px; font-weight: 700; line-height: 11px; padding-left: 2px; }
.pc i { width: 8px; height: 2px; background: #fff; margin-top: 3px; }
.cmd { width: 23px; height: 20px; background: #000; border: 1px solid #777; border-top-width: 3px; color: #ccc; font-size: 6px; line-height: 8px; padding-left: 1px; }
.tray { margin-left: auto; display: flex; align-items: center; gap: 8px; padding-right: 25px; }
.clock { display: flex; flex-direction: column; align-items: center; width: 60px; margin-left: 1px; font-size: 11px; line-height: 18px; }
.notif { margin-left: 6px; }
```
